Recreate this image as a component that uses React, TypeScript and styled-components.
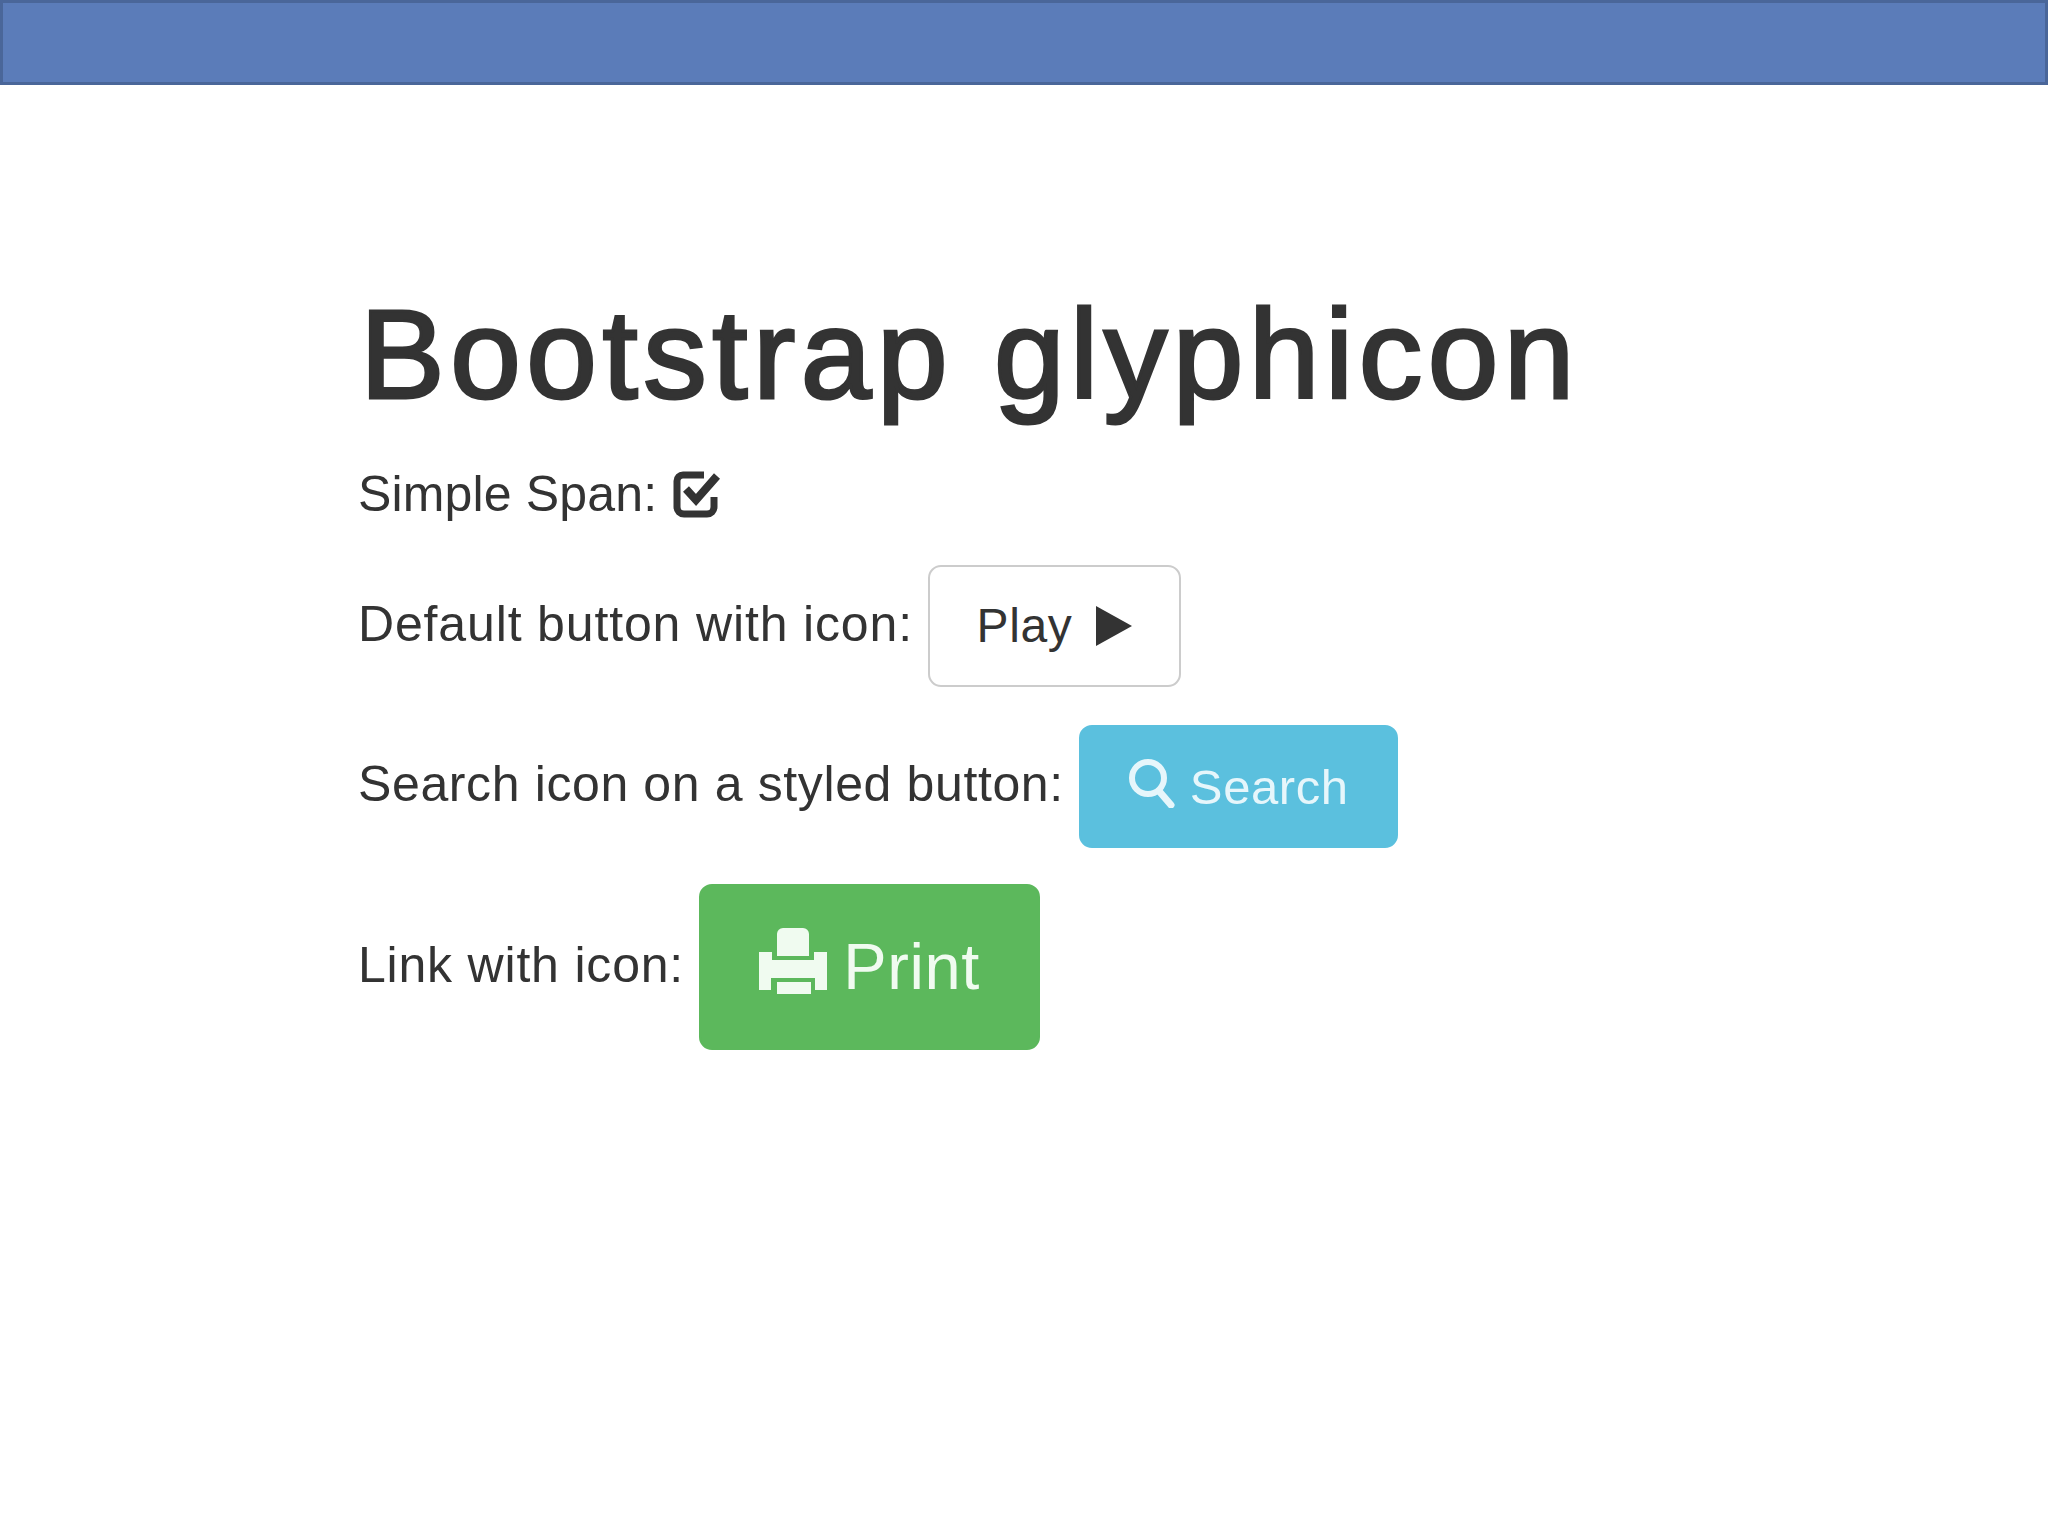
import React from 'react'
import styled, { createGlobalStyle } from 'styled-components'

const GlobalStyle = createGlobalStyle`
  html, body {
    margin: 0;
    padding: 0;
    background: #fff;
  }
`

const Page = styled.div`
  width: 2048px;
  height: 1536px;
  overflow: hidden;
  background: #fff;
  font-family: "Liberation Sans", Arial, sans-serif;
  color: #333;
`

const TopBar = styled.div`
  box-sizing: border-box;
  height: 85px;
  background: #5b7cb9;
  border: 3px solid #4a6699;
`

const Content = styled.main`
  display: flex;
  flex-direction: column;
  align-items: flex-start;
  padding: 207px 0 0 358px;
`

const Title = styled.h1`
  margin: 0 0 48px 2px;
  font-size: 127px;
  line-height: 124px;
  font-weight: 400;
  letter-spacing: 5.5px;
  color: #333;
  -webkit-text-stroke: 3px #333;
`

const Row = styled.div<{ $gap: number }>`
  display: flex;
  align-items: center;
  gap: 15px;
  margin-bottom: ${p => p.$gap}px;
  font-size: 50px;
  line-height: 60px;
`

const Label = styled.span<{ $track: number }>`
  margin-bottom: 5px;
  letter-spacing: ${p => p.$track}px;
`

const Button = styled.a<{ $bg: string; $fg: string; $line: string; $w: number; $h: number; $size: number; $inner: number }>`
  box-sizing: border-box;
  display: flex;
  align-items: center;
  justify-content: center;
  gap: ${p => p.$inner}px;
  width: ${p => p.$w}px;
  height: ${p => p.$h}px;
  background: ${p => p.$bg};
  color: ${p => p.$fg};
  border: 2px solid ${p => p.$line};
  border-radius: 13px;
  font-size: ${p => p.$size}px;
  letter-spacing: 0.6px;
`

const Glyph = styled.svg<{ $lift?: number }>`
  display: block;
  flex: none;
  margin-bottom: ${p => (p.$lift || 0) * 2}px;
`

const CheckIcon = () => (
  <Glyph $lift={3} width="50" height="48" viewBox="0 0 50 48">
    <path d="M32 5H11a6 6 0 0 0-6 6v26a7 7 0 0 0 7 7h23a7 7 0 0 0 7-7V27" fill="none" stroke="#333" strokeWidth="7" />
    <path d="M14 19l10 11L45 6" fill="none" stroke="#333" strokeWidth="8" />
  </Glyph>
)

const PlayIcon = () => (
  <Glyph width="36" height="40" viewBox="0 0 36 40">
    <path d="M0 0l36 20L0 40z" fill="#333" />
  </Glyph>
)

const SearchIcon = () => (
  <Glyph $lift={4} width="48" height="50" viewBox="0 0 48 50">
    <circle cx="20" cy="20" r="16" fill="none" stroke="#e6f6fb" strokeWidth="6" />
    <path d="M31 33l12 14" fill="none" stroke="#e6f6fb" strokeWidth="7" strokeLinecap="round" />
  </Glyph>
)

const PrintIcon = () => (
  <Glyph $lift={6} width="68" height="66" viewBox="0 0 68 66">
    <path
      d="M18 6a6 6 0 0 1 6-6h20a6 6 0 0 1 6 6v22H18zM0 24h13v8h42v-8h13v38H56V50H12v12H0zM18 54h34v12H18z"
      fill="#f0fbf0"
    />
  </Glyph>
)

const App: React.FC = () => (
  <Page>
    <GlobalStyle />
    <TopBar />
    <Content>
      <Title>Bootstrap glyphicon</Title>
      <Row $gap={36}>
        <Label $track={0.15}>Simple Span:</Label>
        <CheckIcon />
      </Row>
      <Row $gap={38}>
        <Label $track={0.85}>Default button with icon:</Label>
        <Button $bg="#fff" $fg="#333" $line="#ccc" $w={253} $h={122} $size={48} $inner={24}>
          Play <PlayIcon />
        </Button>
      </Row>
      <Row $gap={36}>
        <Label $track={0.62}>Search icon on a styled button:</Label>
        <Button $bg="#5bc0de" $fg="#e6f6fb" $line="#5bc0de" $w={319} $h={123} $size={49} $inner={14}>
          <SearchIcon /> Search
        </Button>
      </Row>
      <Row $gap={0}>
        <Label $track={0.8}>Link with icon:</Label>
        <Button $bg="#5cb85c" $fg="#f0fbf0" $line="#5cb85c" $w={341} $h={166} $size={65} $inner={16}>
          <PrintIcon /> Print
        </Button>
      </Row>
    </Content>
  </Page>
)

export default App
